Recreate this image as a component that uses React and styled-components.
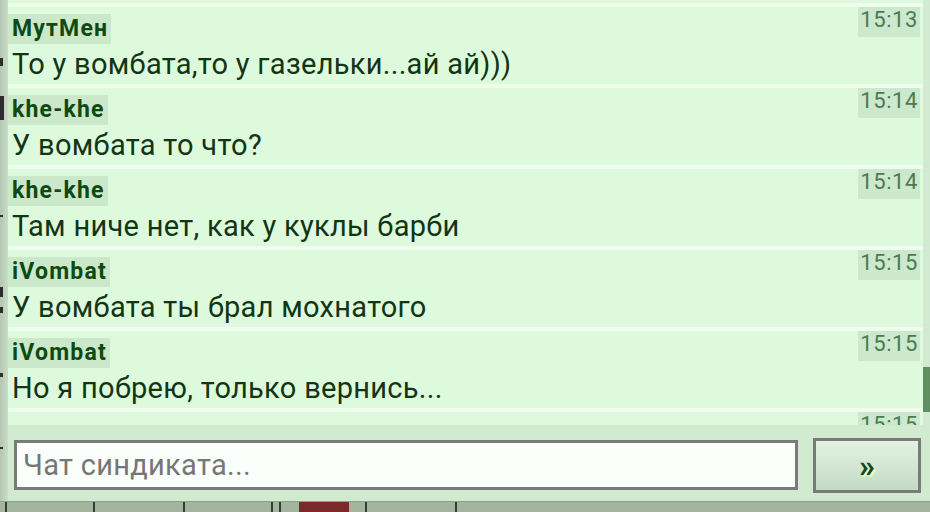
import styled, { createGlobalStyle } from "styled-components";

const GlobalStyle = createGlobalStyle`
  html, body {
    margin: 0;
    padding: 0;
    background: #9fb39a;
  }
  body {
    font-family: Roboto, "Liberation Sans", sans-serif;
    overflow: hidden;
  }
`;

const messages = [
  { nick: "МутМен", text: "То у вомбата,то у газельки...ай ай)))", time: "15:13" },
  { nick: "khe-khe", text: "У вомбата то что?", time: "15:14" },
  { nick: "khe-khe", text: "Там ниче нет, как у куклы барби", time: "15:14" },
  { nick: "iVombat", text: "У вомбата ты брал мохнатого", time: "15:15" },
  { nick: "iVombat", text: "Но я побрею, только вернись...", time: "15:15" },
  { nick: "", text: "", time: "15:15" },
];

const Screen = styled.div`
  width: 930px;
  height: 512px;
  display: flex;
  flex-direction: column;
  overflow: hidden;
`;

const Main = styled.div`
  height: 502px;
  display: flex;
`;

const LeftEdge = styled.div`
  width: 8px;
  flex: none;
  display: flex;
  flex-direction: column;
  background: linear-gradient(90deg, #b5c7b3, #c9dcc8);
`;

const Tick = styled.div`
  height: ${(p) => p.$h}px;
  margin-top: ${(p) => p.$top}px;
  width: ${(p) => p.$w || 3}px;
  background: #2c2c2c;
`;

const Panel = styled.div`
  flex: 1;
  display: flex;
  flex-direction: column;
  min-width: 0;
`;

const ListArea = styled.div`
  height: 425px;
  display: flex;
  overflow: hidden;
  background: #ddfadd;
`;

const List = styled.div`
  flex: 1;
  display: flex;
  flex-direction: column;
  padding-top: 3px;
  overflow: hidden;
  min-width: 0;
`;

const Row = styled.div`
  flex: none;
  border-top: 4px solid #effdef;
  height: 77px;
  display: grid;
  grid-template-columns: 1fr auto;
  grid-template-rows: auto auto;
  align-items: start;
  padding-right: 3px;
`;

const Nick = styled.div`
  justify-self: start;
  visibility: ${(p) => (p.$empty ? "hidden" : "visible")};
  margin-top: 7px;
  padding: 0 3px 0 4px;
  height: 30px;
  line-height: 30px;
  font-size: 23px;
  font-weight: 700;
  letter-spacing: 1.2px;
  color: #0c4a12;
  background: #cbe8cb;
`;

const Time = styled.div`
  grid-row: 1 / span 2;
  grid-column: 2;
  padding: 0 2px 4px 2px;
  line-height: 26px;
  font-size: 22px;
  letter-spacing: 0.6px;
  color: #4b7a52;
  background: #cde9cd;
`;

const Text = styled.div`
  grid-column: 1;
  padding-left: 4px;
  font-size: 29px;
  letter-spacing: 0.3px;
  line-height: 33px;
  color: #123514;
  white-space: nowrap;
`;

const Track = styled.div`
  width: 7px;
  flex: none;
  padding-top: 367px;
  background: #d2ead2;
`;

const Thumb = styled.div`
  height: 45px;
  background: #5f8e62;
`;

const InputBar = styled.div`
  flex: 1;
  display: flex;
  align-items: flex-start;
  gap: 15px;
  padding: 0 9px 0 6px;
  background: #d0ebd0;
`;

const Field = styled.div`
  flex: 1;
  margin-top: 15px;
  height: 50px;
  box-sizing: border-box;
  border: 3px solid #7a7a7a;
  background: #fbfffb;
  padding-left: 6px;
  display: flex;
  align-items: center;
  font-size: 29px;
  letter-spacing: 0.3px;
  color: #767676;
`;

const SendButton = styled.div`
  width: 108px;
  height: 55px;
  margin-top: 13px;
  box-sizing: border-box;
  border: 3px solid #7a7a7a;
  background: linear-gradient(180deg, #e3f2e3 0%, #d2e6d2 55%, #c3dac3 100%);
  display: flex;
  align-items: center;
  justify-content: center;
  font-size: 32px;
  font-weight: 700;
  color: #15471a;
  text-shadow: 2px 2px 0 #e4fbc8;
`;

const BottomStrip = styled.div`
  height: 10px;
  display: flex;
  align-items: stretch;
  background: #a3b59e;
  border-top: 1px solid #8fa28a;
`;

const Cell = styled.div`
  width: ${(p) => p.$w}px;
  flex: none;
  border-right: 2px solid ${(p) => (p.$line ? "#3a3a3a" : "transparent")};
  background: ${(p) => p.$bg || "transparent"};
`;

const ticks = [
  { top: 58, h: 8 },
  { top: 30, h: 24, w: 4 },
  { top: 95, h: 2 },
  { top: 70, h: 10 },
  { top: 10, h: 6 },
  { top: 60, h: 4 },
  { top: 70, h: 2 },
];

const cells = [
  { w: 5, line: true },
  { w: 86, line: true },
  { w: 88, line: true },
  { w: 86, line: true },
  { w: 6, line: true },
  { w: 16 },
  { w: 48, bg: "#7a2a28" },
  { w: 16, line: true },
  { w: 88, line: true },
];

export default function App() {
  return (
    <>
      <GlobalStyle />
      <Screen>
        <Main>
          <LeftEdge>
            {ticks.map((t, i) => (
              <Tick key={i} $top={t.top} $h={t.h} $w={t.w} />
            ))}
          </LeftEdge>
          <Panel>
            <ListArea>
              <List>
                {messages.map((m, i) => (
                  <Row key={i}>
                    <Nick $empty={!m.nick}>{m.nick || "\u00a0"}</Nick>
                    <Time>{m.time}</Time>
                    <Text>{m.text || "\u00a0"}</Text>
                  </Row>
                ))}
              </List>
              <Track>
                <Thumb />
              </Track>
            </ListArea>
            <InputBar>
              <Field>Чат синдиката...</Field>
              <SendButton>»</SendButton>
            </InputBar>
          </Panel>
        </Main>
        <BottomStrip>
          {cells.map((c, i) => (
            <Cell key={i} $w={c.w} $line={c.line} $bg={c.bg} />
          ))}
        </BottomStrip>
      </Screen>
    </>
  );
}
